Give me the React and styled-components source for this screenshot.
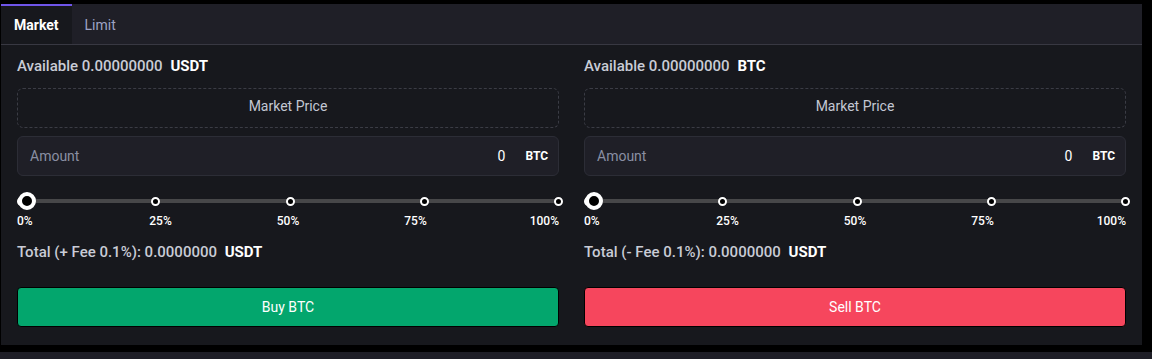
import React from 'react'
import styled, { createGlobalStyle } from 'styled-components'

const GlobalStyle = createGlobalStyle`
  * { box-sizing: border-box; }
  body {
    margin: 0;
    background: #000;
    font-family: Roboto, "Liberation Sans", sans-serif;
  }
`

const marks = [0, 25, 50, 75, 100]

function OrderColumn({ side, balance, asset, feeSign }) {
  const isBuy = side === 'buy'
  return (
    <Column>
      <InfoLine>
        Available {balance} <strong>{asset}</strong>
      </InfoLine>
      <PriceBox>Market Price</PriceBox>
      <AmountBox>
        <Placeholder>Amount</Placeholder>
        <Value>0</Value>
        <Unit>BTC</Unit>
      </AmountBox>
      <Slider>
        <Track>
          {marks.map((m) => (
            <Dot key={m} />
          ))}
          <Handle />
        </Track>
        <Labels>
          {marks.map((m) => (
            <Label key={m}>{m}%</Label>
          ))}
        </Labels>
      </Slider>
      <InfoLine>
        Total ({feeSign} Fee 0.1%): 0.0000000 <strong>USDT</strong>
      </InfoLine>
      <ActionButton $buy={isBuy}>{isBuy ? 'Buy BTC' : 'Sell BTC'}</ActionButton>
    </Column>
  )
}

export default function App() {
  return (
    <>
      <GlobalStyle />
      <Panel>
        <TabBar>
          <Tab $active>Market</Tab>
          <Tab>Limit</Tab>
        </TabBar>
        <Body>
          <OrderColumn side="buy" balance="0.00000000" asset="USDT" feeSign="+" />
          <OrderColumn side="sell" balance="0.00000000" asset="BTC" feeSign="-" />
        </Body>
      </Panel>
      <NextStrip />
    </>
  )
}

const Panel = styled.div`
  margin: 4px 0 0 1px;
  width: 1141px;
  height: 341px;
  background: #17181d;
`

const TabBar = styled.div`
  display: flex;
  height: 41px;
  background: #1f1f27;
  border-bottom: 1px solid #383842;
`

const Tab = styled.div`
  padding: 0 13px;
  display: flex;
  align-items: center;
  font-size: 14px;
  font-weight: ${(p) => (p.$active ? 700 : 400)};
  color: ${(p) => (p.$active ? '#ffffff' : '#9ea3c4')};
  background: ${(p) => (p.$active ? '#17181d' : 'transparent')};
  border-top: 2px solid ${(p) => (p.$active ? '#6f55e8' : 'transparent')};
`

const Body = styled.div`
  display: grid;
  grid-template-columns: 1fr 1fr;
  column-gap: 25px;
  padding: 12px 16px 0 16px;
`

const Column = styled.div`
  display: flex;
  flex-direction: column;
`

const InfoLine = styled.div`
  font-size: 15px;
  font-weight: 500;
  line-height: 18px;
  color: #c9ccd6;

  strong {
    color: #ffffff;
    font-weight: 700;
    margin-left: 4px;
  }
`

const PriceBox = styled.div`
  margin-top: 13px;
  height: 40px;
  border: 1px dashed #3b3c45;
  border-radius: 6px;
  display: flex;
  align-items: center;
  justify-content: center;
  padding-bottom: 4px;
  font-size: 14px;
  color: #c3c7d3;
`

const AmountBox = styled.div`
  margin-top: 8px;
  height: 40px;
  background: #1f1f27;
  border: 1px solid #2c2d36;
  border-radius: 6px;
  display: flex;
  align-items: center;
  padding: 0 10px 0 12px;
  font-size: 14px;
`

const Placeholder = styled.span`
  flex: 1;
  color: #8a8fa3;
`

const Value = styled.span`
  color: #ffffff;
  margin-right: 20px;
`

const Unit = styled.span`
  color: #ffffff;
  font-size: 12px;
  font-weight: 700;
`

const Slider = styled.div`
  margin-top: 23px;
`

const Track = styled.div`
  position: relative;
  height: 4px;
  background: #474749;
  border-radius: 2px;
  display: flex;
  align-items: center;
  justify-content: space-between;
`

const Dot = styled.span`
  width: 9px;
  height: 9px;
  border-radius: 50%;
  background: #000;
  border: 2px solid #ffffff;

  &:nth-child(5) {
    margin-right: -4px;
  }
`

const Handle = styled.span`
  position: absolute;
  left: 1px;
  top: 50%;
  transform: translateY(-50%);
  width: 18px;
  height: 18px;
  border-radius: 50%;
  background: #000;
  border: 4px solid #ffffff;
`

const Labels = styled.div`
  display: flex;
  justify-content: space-between;
  margin-top: 11px;
  margin-bottom: 15px;
`

const Label = styled.span`
  width: 32px;
  text-align: center;
  font-size: 12px;
  font-weight: 500;
  color: #ffffff;
  line-height: 14px;

  &:first-child {
    text-align: left;
  }
  &:last-child {
    text-align: right;
  }
`

const ActionButton = styled.button`
  margin-top: 26px;
  height: 40px;
  border: 1px solid #000;
  border-radius: 4px;
  background: ${(p) => (p.$buy ? '#03a66d' : '#f6465d')};
  color: #ffffff;
  font-family: inherit;
  font-size: 14px;
  font-weight: 400;
`

const NextStrip = styled.div`
  margin-top: 7px;
  height: 20px;
  background: #1e1e26;
`
